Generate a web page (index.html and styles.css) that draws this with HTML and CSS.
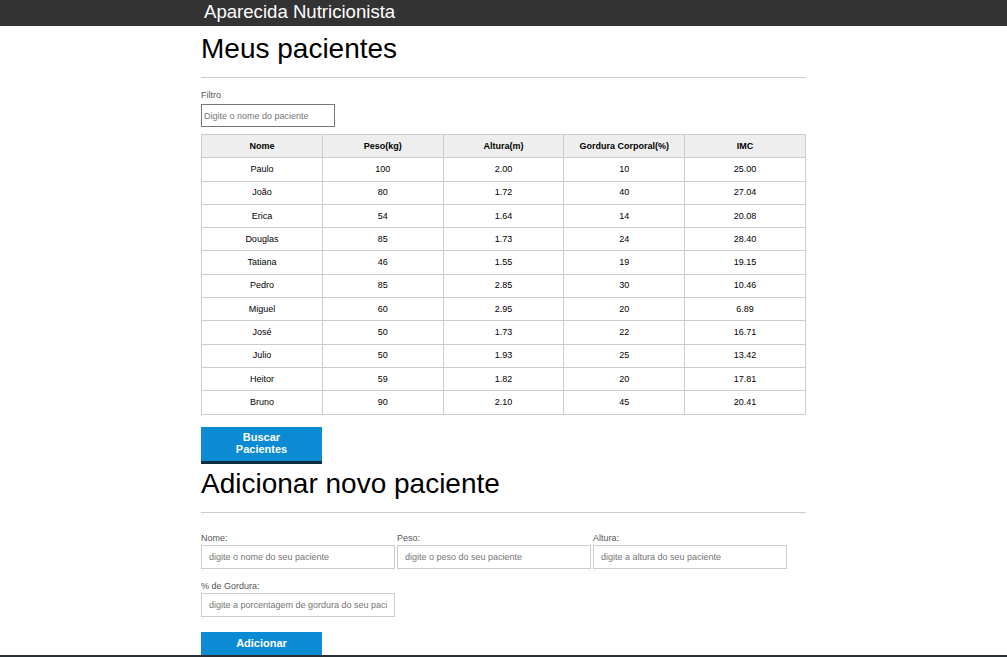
FILE: index.html
```html
<!DOCTYPE html>
<html lang="pt-BR">
<head>
<meta charset="utf-8">
<title>Aparecida Nutricionista</title>
<link rel="stylesheet" href="styles.css">
</head>
<body>
<header class="topbar">
  <div class="container">
    <h1 class="brand">Aparecida Nutricionista</h1>
  </div>
</header>
<main class="container">
  <section class="patients">
    <h2 class="section-title">Meus pacientes</h2>
    <hr class="divider">
    <label class="filter-label" for="filtro">Filtro</label>
    <input class="filter-input" id="filtro" type="text" placeholder="Digite o nome do paciente">
    <table class="patients-table">
      <thead>
        <tr><th>Nome</th><th>Peso(kg)</th><th>Altura(m)</th><th>Gordura Corporal(%)</th><th>IMC</th></tr>
      </thead>
      <tbody>
        <tr><td>Paulo</td><td>100</td><td>2.00</td><td>10</td><td>25.00</td></tr>
        <tr><td>João</td><td>80</td><td>1.72</td><td>40</td><td>27.04</td></tr>
        <tr><td>Erica</td><td>54</td><td>1.64</td><td>14</td><td>20.08</td></tr>
        <tr><td>Douglas</td><td>85</td><td>1.73</td><td>24</td><td>28.40</td></tr>
        <tr><td>Tatiana</td><td>46</td><td>1.55</td><td>19</td><td>19.15</td></tr>
        <tr><td>Pedro</td><td>85</td><td>2.85</td><td>30</td><td>10.46</td></tr>
        <tr><td>Miguel</td><td>60</td><td>2.95</td><td>20</td><td>6.89</td></tr>
        <tr><td>José</td><td>50</td><td>1.73</td><td>22</td><td>16.71</td></tr>
        <tr><td>Julio</td><td>50</td><td>1.93</td><td>25</td><td>13.42</td></tr>
        <tr><td>Heitor</td><td>59</td><td>1.82</td><td>20</td><td>17.81</td></tr>
        <tr><td>Bruno</td><td>90</td><td>2.10</td><td>45</td><td>20.41</td></tr>
      </tbody>
    </table>
    <button class="btn btn-search" type="button">Buscar Pacientes</button>
  </section>
  <section class="add">
    <h2 class="section-title">Adicionar novo paciente</h2>
    <hr class="divider">
    <form class="add-form">
      <div class="field">
        <label for="nome">Nome:</label>
        <input id="nome" type="text" placeholder="digite o nome do seu paciente">
      </div>
      <div class="field">
        <label for="peso">Peso:</label>
        <input id="peso" type="text" placeholder="digite o peso do seu paciente">
      </div>
      <div class="field">
        <label for="altura">Altura:</label>
        <input id="altura" type="text" placeholder="digite a altura do seu paciente">
      </div>
      <div class="field">
        <label for="gordura">% de Gordura:</label>
        <input id="gordura" type="text" placeholder="digite a porcentagem de gordura do seu paciente">
      </div>
      <div class="form-actions">
        <button class="btn btn-add" type="button">Adicionar</button>
      </div>
    </form>
  </section>
</main>
<footer class="footer"></footer>
</body>
</html>
```
FILE: styles.css
```css
* { box-sizing: border-box; }

html, body {
  margin: 0;
  padding: 0;
  background: #fff;
  font-family: "Liberation Sans", Arial, sans-serif;
  color: #000;
}

.container {
  width: 605px;
  margin: 0 auto;
}

.topbar {
  background: #333;
  height: 26px;
}

.brand {
  margin: 0;
  padding-left: 3px;
  font-size: 18.6px;
  font-weight: normal;
  line-height: 24px;
  color: #fff;
}

.section-title {
  margin: 7px 0 0;
  font-size: 28px;
  font-weight: normal;
  line-height: 32px;
}

.divider {
  margin: 12px 0 0;
  border: 0;
  border-top: 1px solid #ccc;
  height: 0;
}

.filter-label {
  display: block;
  margin-top: 12px;
  font-size: 9px;
  line-height: 10px;
  color: #555;
}

.filter-input {
  display: block;
  margin-top: 4px;
  width: 134px;
  height: 23px;
  padding: 0 2px;
  border: 1px solid #767676;
  font-family: inherit;
  font-size: 9px;
}

input::placeholder { color: #757575; }

.patients-table {
  margin-top: 7px;
  width: 605px;
  border-collapse: collapse;
  table-layout: fixed;
  font-size: 9px;
}

.patients-table th,
.patients-table td {
  border: 1px solid #ccc;
  text-align: center;
  height: 23.3px;
  padding: 0 4px 1px;
}

.patients-table th {
  background: #eee;
  font-weight: bold;
}

.btn {
  display: block;
  width: 121px;
  border: 0;
  background: #0b8bd3;
  color: #fff;
  font-family: inherit;
  font-weight: bold;
  font-size: 11px;
  line-height: 12px;
  cursor: pointer;
}

.btn-search {
  margin-top: 12px;
  height: 37px;
  padding: 0 16px 2px;
  border-bottom: 3px solid #0d2d40;
}

.add .section-title { margin-top: 4px; }

.add-form {
  margin-top: 20px;
  display: grid;
  grid-template-columns: 194px 194px 194px;
  column-gap: 2px;
  row-gap: 12px;
}

.field label {
  display: block;
  font-size: 9px;
  line-height: 10px;
  color: #555;
  margin-bottom: 2px;
}

.field input {
  display: block;
  width: 100%;
  height: 24px;
  padding: 0 7px;
  border: 1px solid #ccc;
  font-family: inherit;
  font-size: 9px;
}

.form-actions {
  grid-column: 1 / -1;
  margin-top: 3px;
}

.btn-add {
  height: 23px;
  padding: 0;
}

.footer {
  height: 40px;
  background: #2a2e35;
}
```
